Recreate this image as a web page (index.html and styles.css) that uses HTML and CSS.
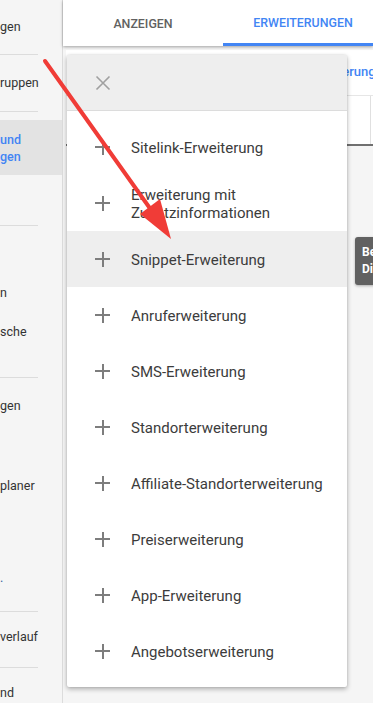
FILE: index.html
```html
<!DOCTYPE html>
<html lang="de">
<head>
<meta charset="utf-8">
<title>Erweiterungen</title>
<link rel="stylesheet" href="styles.css">
</head>
<body>
<div class="app">
  <aside class="sidebar">
    <div class="srow g17">gen</div>
    <div class="sep g17"></div>
    <div class="srow g18">ruppen</div>
    <div class="sep g18"></div>
    <div class="sel g8"><span>und</span><span>gen</span></div>
    <div class="sep g50"></div>
    <div class="srow g57">n</div>
    <div class="srow g19">sche</div>
    <div class="sep g35"></div>
    <div class="srow g18">gen</div>
    <div class="srow g60">planer</div>
    <div class="srow g72 dot">.</div>
    <div class="sep g23"></div>
    <div class="srow g15">verlauf</div>
    <div class="sep g20"></div>
    <div class="srow g15">nd</div>
  </aside>
  <main class="main">
    <nav class="tabs">
      <div class="tab">ANZEIGEN</div>
      <div class="tab active">ERWEITERUNGEN</div>
    </nav>
    <section class="panel">
      <div class="panel-head"><span class="plink">Erweiterung</span></div>
      <div class="panel-row"><div class="pcell"></div></div>
    </section>
  </main>

  <div class="menu">
    <div class="menu-head">
      <svg class="close" width="16" height="16" viewBox="0 0 16 16"><path d="M1.5 1.5L14.5 14.5M14.5 1.5L1.5 14.5" stroke="#a0a0a0" stroke-width="1.6" fill="none"/></svg>
    </div>
    <ul class="menu-list">
      <li class="mitem"><span class="plus"></span><span class="mtext">Sitelink-Erweiterung</span></li>
      <li class="mitem"><span class="plus"></span><span class="mtext">Erweiterung mit<br>Zusatzinformationen</span></li>
      <li class="mitem hover"><span class="plus"></span><span class="mtext">Snippet-Erweiterung</span></li>
      <li class="mitem"><span class="plus"></span><span class="mtext">Anruferweiterung</span></li>
      <li class="mitem"><span class="plus"></span><span class="mtext">SMS-Erweiterung</span></li>
      <li class="mitem"><span class="plus"></span><span class="mtext">Standorterweiterung</span></li>
      <li class="mitem"><span class="plus"></span><span class="mtext">Affiliate-Standorterweiterung</span></li>
      <li class="mitem"><span class="plus"></span><span class="mtext">Preiserweiterung</span></li>
      <li class="mitem"><span class="plus"></span><span class="mtext">App-Erweiterung</span></li>
      <li class="mitem"><span class="plus"></span><span class="mtext">Angebotserweiterung</span></li>
    </ul>
  </div>

  <div class="tooltip">Be<br>Di</div>

  <svg class="arrow" width="373" height="703" viewBox="0 0 373 703">
    <line x1="45" y1="61" x2="154" y2="214" stroke="#f03c37" stroke-width="4" stroke-linecap="round"/>
    <polygon points="171,239 140,214 160,199" fill="#f03c37"/>
  </svg>
</div>
</body>
</html>
```
FILE: styles.css
```css
* { box-sizing: border-box; }
html, body {
  margin: 0;
  padding: 0;
  width: 373px;
  height: 703px;
  overflow: hidden;
  background: #f5f5f5;
  font-family: Roboto, "Liberation Sans", Arial, sans-serif;
}
.app {
  position: relative;
  display: flex;
  width: 373px;
  height: 703px;
  overflow: hidden;
}
.sidebar {
  flex: 0 0 63px;
  height: 703px;
  background: #f5f5f5;
  border-right: 1px solid #dcdcdc;
  display: flex;
  flex-direction: column;
  overflow: hidden;
}
.srow {
  height: 20px;
  line-height: 20px;
  font-size: 12.5px;
  color: #333;
  white-space: nowrap;
}
.srow.dot { color: #3a5f9e; }
.sep {
  width: 38px;
  height: 1px;
  flex: 0 0 1px;
  background: #dcdcdc;
}
.sel {
  height: 55px;
  flex: 0 0 55px;
  background: #e3e3e3;
  display: flex;
  flex-direction: column;
  justify-content: center;
  font-size: 12.5px;
  line-height: 17px;
  color: #4285f4;
  font-weight: 500;
}
.g8 { margin-top: 8px; }
.g15 { margin-top: 15px; }
.g17 { margin-top: 17px; }
.g18 { margin-top: 18px; }
.g19 { margin-top: 19px; }
.g20 { margin-top: 20px; }
.g23 { margin-top: 23px; }
.g35 { margin-top: 35px; }
.g50 { margin-top: 50px; }
.g57 { margin-top: 57px; }
.g60 { margin-top: 60px; }
.g72 { margin-top: 72px; }

.main {
  flex: 1;
  min-width: 0;
  display: flex;
  flex-direction: column;
  background: #f5f5f5;
}
.tabs {
  height: 46px;
  flex: 0 0 46px;
  display: flex;
  background: #fff;
  box-shadow: 0 1px 3px rgba(0,0,0,0.35);
  overflow: hidden;
  position: relative;
  z-index: 1;
}
.tab {
  flex: 0 0 160px;
  display: flex;
  align-items: center;
  justify-content: center;
  font-size: 12.4px;
  font-weight: 500;
  color: #616161;
  border-bottom: 2px solid transparent;
  padding-top: 2px;
}
.tab.active {
  color: #4285f4;
  border-bottom: 3px solid #4285f4;
}
.panel {
  margin-top: 4px;
  margin-left: 3px;
  height: 96px;
  background: #fff;
  border-bottom: 2px solid #707070;
  display: flex;
  flex-direction: column;
}
.panel-head {
  height: 45px;
  display: flex;
  align-items: center;
  padding-left: 240px;
  white-space: nowrap;
  overflow: hidden;
}
.plink {
  color: #4285f4;
  font-weight: 500;
  font-size: 13px;
  margin-top: -2px;
}
.panel-row {
  flex: 1;
  border-top: 1px solid #e6e6e6;
  display: flex;
}
.pcell {
  width: 305px;
  border-right: 1px solid #e0e0e0;
}

.menu {
  position: absolute;
  left: 67px;
  top: 55px;
  width: 280px;
  background: #fff;
  box-shadow: 0 2px 5px rgba(0,0,0,0.3), 0 0 2px rgba(0,0,0,0.12);
  border-radius: 2px;
  z-index: 5;
}
.menu-head {
  height: 56px;
  background: #eeeeee;
  border-bottom: 1px solid #dcdcdc;
  display: flex;
  align-items: center;
  padding-left: 28px;
}
.close { display: block; }
.menu-list {
  list-style: none;
  margin: 0;
  padding: 8px 0;
}
.mitem {
  height: 56px;
  display: flex;
  align-items: center;
  font-size: 15px;
  line-height: 18px;
  color: #3c3c3c;
}
.mitem.hover { background: #eeeeee; }
.plus {
  position: relative;
  width: 15px;
  height: 15px;
  margin-left: 28px;
  margin-right: 21px;
  flex: 0 0 15px;
}
.plus::before, .plus::after {
  content: "";
  position: absolute;
  background: #7d7d7d;
}
.plus::before { left: 0; right: 0; top: 6.5px; height: 2px; }
.plus::after { top: 0; bottom: 0; left: 6.5px; width: 2px; }
.mtext { padding-top: 1px; }

.tooltip {
  position: absolute;
  left: 355px;
  top: 237px;
  width: 60px;
  height: 48px;
  background: #616161;
  border-radius: 3px;
  box-shadow: 0 1px 3px rgba(0,0,0,0.3);
  color: #fff;
  font-weight: 700;
  font-size: 12px;
  line-height: 17px;
  padding: 7px 0 0 7px;
  z-index: 4;
}
.arrow {
  position: absolute;
  left: 0;
  top: 0;
  z-index: 10;
  pointer-events: none;
}
```
